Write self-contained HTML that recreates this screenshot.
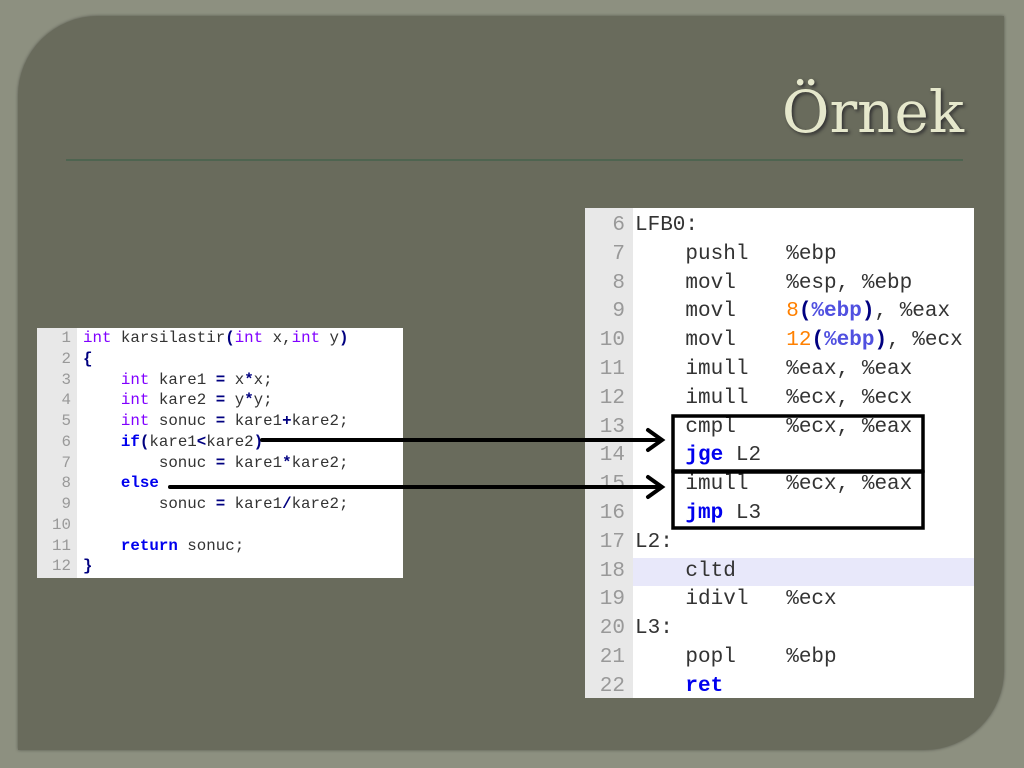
<!DOCTYPE html><html><head><style>
html,body{margin:0;width:1024px;height:768px;overflow:hidden}
body{background:#8d9080;position:relative;font-family:"Liberation Mono",monospace}
.panel{position:absolute;left:18px;top:16px;width:986px;height:734px;background:#696b5c;border-radius:80px 0 80px 0;box-shadow:0 0 3px rgba(0,0,0,.4)}
h1{position:absolute;right:60px;top:78px;margin:0;font:400 58px "DejaVu Serif","Liberation Serif",serif;color:#e6e8cc;text-shadow:2px 2px 3px #333}
.rule{position:absolute;left:66px;top:159px;width:897px;height:2px;background:#4e6450}
.code{position:absolute;background:#fff}
.g{position:absolute;left:0;top:0;bottom:0;background:#e6e6e6;color:#999;text-align:right}
.ln{white-space:pre}
.k{color:#0000ee;font-weight:bold}.t{color:#8000ff}.o{color:#000080;font-weight:bold}.n{color:#ff8000}.r{color:#5050e0;font-weight:bold}
.L .ln{height:20.75px;line-height:20.75px}
.R .ln{height:28.8px;line-height:28.8px}
</style></head><body>
<div class="panel"></div>
<h1>Örnek</h1>
<div class="rule"></div>

<div class="code L" style="left:37px;top:328px;width:366px;height:250px;font-size:15.8px;color:#333">
<div class="g" style="width:34px;padding-right:6px;background:#e8e8e8"><div class="ln">1</div><div class="ln">2</div><div class="ln">3</div><div class="ln">4</div><div class="ln">5</div><div class="ln">6</div><div class="ln">7</div><div class="ln">8</div><div class="ln">9</div><div class="ln">10</div><div class="ln">11</div><div class="ln">12</div></div>
<div style="position:absolute;left:46px;top:0">
<div class="ln"><span class="t">int</span> karsilastir<span class="o">(</span><span class="t">int</span> x,<span class="t">int</span> y<span class="o">)</span></div>
<div class="ln"><span class="o">{</span></div>
<div class="ln">    <span class="t">int</span> kare1 <span class="o">=</span> x<span class="o">*</span>x;</div>
<div class="ln">    <span class="t">int</span> kare2 <span class="o">=</span> y<span class="o">*</span>y;</div>
<div class="ln">    <span class="t">int</span> sonuc <span class="o">=</span> kare1<span class="o">+</span>kare2;</div>
<div class="ln">    <span class="k">if</span><span class="o">(</span>kare1<span class="o">&lt;</span>kare2<span class="o">)</span></div>
<div class="ln">        sonuc <span class="o">=</span> kare1<span class="o">*</span>kare2;</div>
<div class="ln">    <span class="k">else</span></div>
<div class="ln">        sonuc <span class="o">=</span> kare1<span class="o">/</span>kare2;</div>
<div class="ln"> </div>
<div class="ln">    <span class="k">return</span> sonuc;</div>
<div class="ln"><span class="o">}</span></div>
</div></div>

<div class="code R" style="left:585px;top:208px;width:389px;height:490px;font-size:21px;color:#333;overflow:hidden">
<div style="position:absolute;left:48px;right:0;top:349.6px;height:28.8px;background:#e8e8fa"></div>
<div class="g" style="width:40px;padding-right:8px;padding-top:4px;background:#e8e8e8"><div class="ln">6</div><div class="ln">7</div><div class="ln">8</div><div class="ln">9</div><div class="ln">10</div><div class="ln">11</div><div class="ln">12</div><div class="ln">13</div><div class="ln">14</div><div class="ln">15</div><div class="ln">16</div><div class="ln">17</div><div class="ln">18</div><div class="ln">19</div><div class="ln">20</div><div class="ln">21</div><div class="ln">22</div></div>
<div style="position:absolute;left:50px;top:4px">
<div class="ln">LFB0:</div>
<div class="ln">    pushl   %ebp</div>
<div class="ln">    movl    %esp, %ebp</div>
<div class="ln">    movl    <span class="n">8</span><span class="o">(</span><span class="r">%ebp</span><span class="o">)</span>, %eax</div>
<div class="ln">    movl    <span class="n">12</span><span class="o">(</span><span class="r">%ebp</span><span class="o">)</span>, %ecx</div>
<div class="ln">    imull   %eax, %eax</div>
<div class="ln">    imull   %ecx, %ecx</div>
<div class="ln">    cmpl    %ecx, %eax</div>
<div class="ln">    <span class="k">jge</span> L2</div>
<div class="ln">    imull   %ecx, %eax</div>
<div class="ln">    <span class="k">jmp</span> L3</div>
<div class="ln">L2:</div>
<div class="ln">    cltd</div>
<div class="ln">    idivl   %ecx</div>
<div class="ln">L3:</div>
<div class="ln">    popl    %ebp</div>
<div class="ln">    <span class="k">ret</span></div>
</div></div>

<svg style="position:absolute;left:0;top:0" width="1024" height="768">
<rect x="673" y="416" width="250" height="55" fill="none" stroke="#000" stroke-width="3.5"/>
<rect x="673" y="472" width="250" height="56" fill="none" stroke="#000" stroke-width="3.5"/>
<g stroke="#000" stroke-width="4" fill="none" stroke-linecap="round">
<line x1="262" y1="440" x2="660" y2="440"/><polyline points="648,430 662,440 648,450"/>
<line x1="170" y1="487" x2="660" y2="487"/><polyline points="648,477 662,487 648,497"/>
</g></svg>
</body></html>
